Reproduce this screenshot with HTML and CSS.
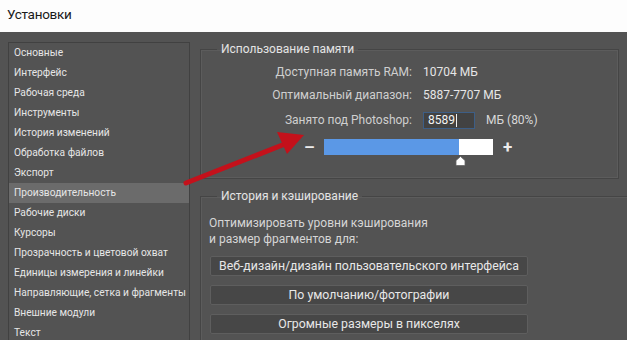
FILE: index.html
```html
<!DOCTYPE html>
<html lang="ru">
<head>
<meta charset="utf-8">
<link rel="stylesheet" href="styles.css">
</head>
<body>
<div class="titlebar">Установки</div>
<div class="main">
  <ul class="sidebar">
    <li>Основные</li>
    <li>Интерфейс</li>
    <li>Рабочая среда</li>
    <li>Инструменты</li>
    <li>История изменений</li>
    <li>Обработка файлов</li>
    <li>Экспорт</li>
    <li class="active">Производительность</li>
    <li>Рабочие диски</li>
    <li>Курсоры</li>
    <li>Прозрачность и цветовой охват</li>
    <li>Единицы измерения и линейки</li>
    <li>Направляющие, сетка и фрагменты</li>
    <li>Внешние модули</li>
    <li>Текст</li>
  </ul>
  <div class="content">
    <fieldset class="group memory">
      <legend>Использование памяти</legend>
      <div class="mem-grid">
        <span class="label">Доступная память RAM:</span><span class="value">10704 МБ</span>
        <span class="label">Оптимальный диапазон:</span><span class="value">5887-7707 МБ</span>
        <span class="label row3">Занято под Photoshop:</span>
        <span class="value inline"><span class="input">8589<span class="caret"></span></span><span class="unit">МБ (80%)</span></span>
      </div>
      <div class="slider-row">
        <span class="sign">–</span>
        <div class="bar"><div class="fill" style="width:80%"></div>
          <svg class="thumb" width="11" height="10" viewBox="0 0 11 10"><path d="M5.5 0.5 L10 4.5 V9.5 H1 V4.5 Z" fill="#fff" stroke="#666" stroke-width="0.8"/></svg>
        </div>
        <span class="sign plus">+</span>
      </div>
    </fieldset>
    <fieldset class="group cache">
      <legend>История и кэширование</legend>
      <p class="desc">Оптимизировать уровни кэширования<br>и размер фрагментов для:</p>
      <div class="buttons">
        <button class="btn">Веб-дизайн/дизайн пользовательского интерфейса</button>
        <button class="btn">По умолчанию/фотографии</button>
        <button class="btn">Огромные размеры в пикселях</button>
      </div>
    </fieldset>
  </div>
</div>
<svg class="arrow" width="627" height="340" viewBox="0 0 627 340">
  <line x1="186" y1="183" x2="285" y2="144" stroke="#c4111b" stroke-width="5" stroke-linecap="round"/>
  <polygon points="304,135 287,154 277,132" fill="#c4111b"/>
</svg>
</body>
</html>
```

FILE: styles.css
```css
html, body {
  margin: 0;
  padding: 0;
  width: 627px;
  height: 340px;
  overflow: hidden;
  font-family: Roboto, "Noto Sans", sans-serif;
  position: relative;
}
.titlebar {
  height: 32px;
  background: #fdfdfd;
  color: #1a1a1a;
  font-size: 13.5px;
  letter-spacing: -0.3px;
  line-height: 29px;
  padding-left: 7px;
}
.main {
  display: flex;
  align-items: flex-start;
  background: #535353;
  height: 308px;
  overflow: hidden;
  padding-left: 8px;
  color: #dcdcdc;
}
.sidebar {
  list-style: none;
  margin: 10px 0 0 0;
  padding: 0;
  width: 180px;
  border: 1px solid #414141;
  flex: none;
  font-size: 10.2px;
}
.sidebar li {
  height: 20px;
  line-height: 20px;
  padding-left: 5px;
  white-space: nowrap;
  color: #e6e6e6;
}
.sidebar li.active {
  background: #6b6b6b;
}
.content {
  margin-left: 10px;
  display: flex;
  flex-direction: column;
}
.group {
  margin: 0;
  padding: 0;
  border: 1px solid #454545;
  box-shadow: inset 0 0 0 1px #5c5c5c;
}
.group legend {
  margin-left: 16px;
  padding: 0 4px;
  font-size: 12px;
  line-height: 16px;
  color: #e4e4e4;
}
.memory {
  margin-top: 9px;
  width: 419px;
  box-sizing: border-box;
  height: 138px;
}
.mem-grid {
  display: grid;
  grid-template-columns: 211px auto;
  column-gap: 11px;
  row-gap: 0;
  margin-top: 4px;
  font-size: 12px;
}
.mem-grid .label {
  text-align: right;
  color: #cfcfcf;
  line-height: 23px;
  white-space: nowrap;
}
.mem-grid .row3 {
  margin-top: 2px;
}
.mem-grid .value {
  color: #e6e6e6;
  line-height: 23px;
  white-space: nowrap;
}
.mem-grid .inline {
  display: flex;
  align-items: center;
  gap: 11px;
  margin-top: 2px;
}
.input {
  display: inline-flex;
  align-items: center;
  width: 52px;
  height: 17px;
  box-sizing: border-box;
  background: #424242;
  border: 1px solid #3d5e86;
  padding-left: 4px;
  color: #f4f4f4;
  line-height: 15px;
}
.caret {
  display: inline-block;
  width: 1px;
  height: 13px;
  background: #f0f0f0;
  margin-left: 1px;
}
.unit {
  color: #d8d8d8;
}
.slider-row {
  display: flex;
  align-items: center;
  margin-top: 7px;
  margin-left: 103px;
  height: 16px;
}
.sign {
  width: 20px;
  font-size: 17px;
  font-weight: bold;
  color: #ececec;
  line-height: 16px;
}
.sign.plus {
  margin-left: 10px;
}
.bar {
  position: relative;
  width: 169px;
  height: 16px;
  background: #ffffff;
}
.fill {
  height: 100%;
  background: #5b98e6;
}
.thumb {
  position: absolute;
  left: 131px;
  top: 17px;
}
.cache {
  margin-top: 9px;
  width: 440px;
  height: 160px;
  box-sizing: border-box;
}
.desc {
  margin: 11px 0 0 8px;
  font-size: 12px;
  line-height: 16px;
  color: #d6d6d6;
}
.buttons {
  display: flex;
  flex-direction: column;
  gap: 9px;
  margin: 9px 0 0 9px;
}
.btn {
  width: 318px;
  height: 20px;
  padding: 0;
  font-family: Roboto, "Noto Sans", sans-serif;
  font-size: 12.3px;
  line-height: 18px;
  white-space: nowrap;
  color: #e8e8e8;
  background: #474747;
  border: 1px solid #5e5e5e;
  border-radius: 2px;
}
.arrow {
  position: absolute;
  left: 0;
  top: 0;
  pointer-events: none;
}
```
